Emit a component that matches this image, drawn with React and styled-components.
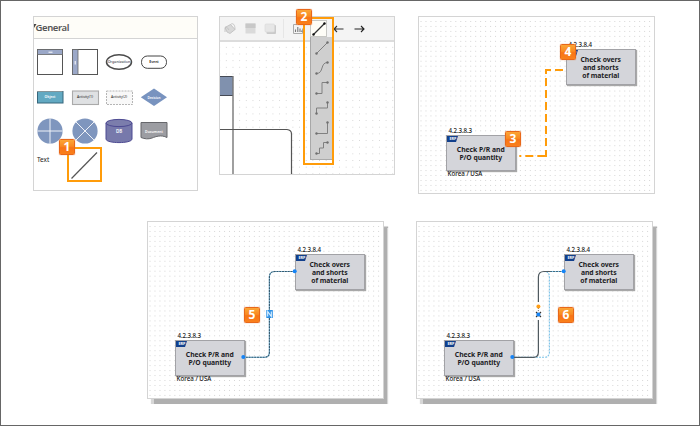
import React from 'react';
import styled, { createGlobalStyle } from 'styled-components';

const GlobalStyle = createGlobalStyle`
  * { box-sizing: border-box; }
  body { margin: 0; background: #fff; font-family: "Noto Sans", "Open Sans", sans-serif; }
  svg { display: block; overflow: visible; }
`;

const Page = styled.main`
  width: 700px;
  height: 426px;
  border: 1px solid #666;
  padding: 15px 0 0;
  background: #fff;
  overflow: hidden;
`;

const TopRow = styled.section`
  display: flex;
  align-items: flex-start;
  height: 205px;
  padding-left: 32px;
`;

const BottomRow = styled.section`
  display: flex;
  gap: 32px;
  padding-left: 146px;
`;

const Panel = styled.div`
  position: relative;
  border: 1px solid #d4d4d4;
  background: #fff;
`;

const Palette = styled(Panel)`
  width: 165px;
  height: 175px;
  margin-right: 21px;
`;

const PaletteHeader = styled.header`
  display: flex;
  align-items: center;
  height: 22px;
  border-bottom: 1px solid #d4d4d4;
  background: #fefdf8;
  color: #555;
  font-size: 9.5px;
  font-weight: 600;
  letter-spacing: -0.4px;
`;

const Tiles = styled.div`
  display: grid;
  grid-template-columns: repeat(4, 32px);
  grid-auto-rows: 32px;
  gap: 2.5px;
  padding-top: 7px;
`;

const TileSvg = styled.svg`
  width: 32px;
  height: 32px;
  text-anchor: middle;
  font-size: 3.8px;
  font-family: "Noto Sans", sans-serif;
`;

const TextTile = styled.span`
  padding: 5.5px 0 0 3px;
  font: 400 6.4px/9px "Noto Sans", sans-serif;
  color: #222;
`;

const SelectedTile = styled.div`
  width: 35px;
  height: 35px;
  margin: -2.5px -1.5px;
  padding: 0;
  border: 2px solid #ff9c0a;
  background: #fff;
`;

const dotted = ({ $pitch }) => `
  background-image: radial-gradient(circle at 50% 50%, #d6d6d6 0.45px, transparent 0.9px);
  background-size: ${$pitch}px ${$pitch}px;
`;

const Editor = styled(Panel)`
  width: 176px;
  height: 159px;
  margin-right: 23px;
`;

const Toolbar = styled.div`
  display: flex;
  align-items: center;
  height: 25px;
  border-bottom: 2px solid #dcdcdc;
  background: #f4f4f4;
`;

const ToolButton = styled.span`
  display: flex;
  flex: none;
  align-items: center;
  justify-content: center;
  width: ${({ $w }) => $w || 20}px;
  height: 17px;
  border: 1px solid ${({ $active }) => ($active ? '#c8c8c4' : 'transparent')};
  background: ${({ $active }) => ($active ? '#fefdf7' : 'transparent')};

  svg { flex: none; }
`;

const Divider = styled.i`
  width: 1px;
  height: 19px;
  margin: 0 2px 0 3px;
  background: #e6e6e6;
`;

const EditorCanvas = styled.div`
  height: 132px;
  ${dotted}
  background-position: 3px 2px;
`;

const LineMenu = styled.div`
  position: absolute;
  left: 90px;
  top: 20px;
  width: 23px;
  height: 123px;
  display: flex;
  flex-direction: column;
  align-items: center;
  padding-top: 1px;
  background: #cfcfcf;
  border-left: 1px solid #a8a8a8;
  border-bottom: 1px solid #aaa;
`;

const MenuFrame = styled.div`
  position: absolute;
  left: 83px;
  top: 0;
  width: 31px;
  height: 148px;
  border: 2px solid #ff9c0a;
`;

const Flow = styled(Panel)`
  width: 237px;
  height: 178px;
  ${dotted}
  background-position: 4.5px 2px;
  box-shadow: ${({ $raised }) => ($raised ? '4px 4.5px 1px #afafaf' : 'none')};
`;

const Overlay = styled.svg`
  position: absolute;
  left: -1px;
  top: -1px;
  width: 237px;
  height: 178px;
  fill: none;
`;

const FlowNode = styled.div`
  position: absolute;
  left: ${({ $x }) => $x}px;
  top: ${({ $y }) => $y}px;
  width: 69.5px;
  height: 35.5px;
  display: flex;
  align-items: center;
  justify-content: center;
  padding-top: 2.5px;
  border: 1px solid #a2a2a6;
  background: #d4d5da;
  box-shadow: 1px 1px 1px #a8a8a8;
  color: #1c1c24;
  font-size: 6.8px;
  line-height: 8.3px;
  font-weight: 700;
  letter-spacing: -0.04px;
  text-align: center;
  white-space: pre;
`;

const NodeCaption = styled.span`
  position: absolute;
  left: ${({ $left }) => $left}px;
  top: ${({ $top }) => $top}px;
  color: #151515;
  font-size: 6.2px;
  line-height: 8px;
  font-weight: 500;
  letter-spacing: ${({ $ls }) => $ls || 0}px;
`;

const ErpTag = styled.span`
  position: absolute;
  left: 0;
  top: 0;
  width: 11px;
  height: 6px;
  padding-left: 2.5px;
  background: #12408c;
  clip-path: polygon(0 0, 100% 0, 82% 100%, 0 100%);
  color: #fff;
  font-size: 3.8px;
  line-height: 6px;
  text-align: left;
`;

const Badge = styled.b`
  position: absolute;
  left: ${({ $x }) => $x}px;
  top: ${({ $y }) => $y}px;
  display: grid;
  place-items: center;
  width: 16px;
  height: 16px;
  border: 1px solid #e8681a;
  border-radius: 1.5px;
  background: linear-gradient(#fba536, #f98a22 45%, #f87416 55%, #f9801c);
  box-shadow: 0 0 1px #d96a20;
  color: #fff;
  font: 700 12px/14px "Noto Sans", sans-serif;
`;

const Tile = ({ children }) => <TileSvg viewBox="-16 -16 32 32">{children}</TileSvg>;

const linePaths = [
  'M-5.5 5.5L5.5-5.5',
  'M-5.5 5.5C2 5.5-2-5.5 5.5-5.5',
  'M-5.5 5.5H0V-5.5H5.5',
  'M-5.5 5.5V0H5.5V-5.5',
  'M-5.5 5.5H5.5V-5.5',
  'M-5.5 5.5H-2.5V0H1.5V-5.5H5.5',
];

const LineIcon = ({ d, dark }) => (
  <svg width="20" height="20" viewBox="-10 -10 20 20" fill="none">
    <path d={d} stroke={dark ? '#333' : '#808080'} strokeWidth={dark ? 1.2 : 1} />
    <circle cx="-5.5" cy="5.5" r="1.2" fill={dark ? '#111' : '#707070'} />
    <circle cx="5.5" cy="-5.5" r="1.2" fill={dark ? '#111' : '#707070'} />
  </svg>
);

function ShapePalette() {
  return (
    <Palette>
      <PaletteHeader>
        <svg width="1.5" height="5" viewBox="0 0 1.5 5"><path d="M0-1H2.5L0 3Z" fill="#444" /></svg>
        General
      </PaletteHeader>
      <Tiles>
        <Tile>
          <rect x="-12.5" y="-12.5" width="25" height="25" fill="#fff" stroke="#555" />
          <rect x="-12.5" y="-12.5" width="25" height="5" fill="#9ba8c8" stroke="#666" strokeWidth=".8" />
          <path d="M-1.5-9.8H2.5" stroke="#fff" />
        </Tile>
        <Tile>
          <rect x="-12.5" y="-12.5" width="25" height="25" fill="#fff" stroke="#555" />
          <rect x="-12.5" y="-12.5" width="5.5" height="25" fill="#9ba8c8" stroke="#666" strokeWidth=".8" />
          <path d="M-9.8-1V2.5" stroke="#fff" />
        </Tile>
        <Tile>
          <ellipse rx="12.5" ry="7.3" fill="#fff" stroke="#4b4b4b" strokeWidth="1.5" />
          <text y="1.2" fill="#223" fontSize="3.7">Organization</text>
        </Tile>
        <Tile>
          <rect x="-12.5" y="-6" width="25" height="12.3" rx="5.8" fill="#fff" stroke="#444" />
          <text y="1.3" fill="#222" fontWeight="600" fontSize="3.5">Event</text>
        </Tile>
        <Tile>
          <rect x="-12.5" y="-5.5" width="25.5" height="11.5" fill="#62a9c2" stroke="#37677c" />
          <path d="M-13-5.5H12.5" stroke="#85959a" />
          <text y="1.3" fill="#fff" fontSize="3.4" fontWeight="600">Object</text>
        </Tile>
        <Tile>
          <rect x="-12.5" y="-6" width="26" height="13.5" fill="#dfe1e3" stroke="#aaa" strokeWidth="1.1" />
          <text y="1" fill="#222" fontSize="3.5">Activity(1)</text>
        </Tile>
        <Tile>
          <rect x="-12.5" y="-6" width="26" height="13.5" fill="#f8f8f8" stroke="#b5b5b5" strokeDasharray="2 1" />
          <text y="1" fill="#222" fontSize="3.5">Activity(2)</text>
        </Tile>
        <Tile>
          <path d="M0-8.5L13 .2L0 9L-13.2 .2Z" fill="#7893bf" />
          <text y="2" fill="#fff" fontSize="3.2" fontWeight="600">Decision</text>
        </Tile>
        <Tile>
          <circle r="12.6" fill="#7f96be" />
          <path d="M-12.6 0H12.6M0-12.6V12.6" stroke="#eef1f7" />
        </Tile>
        <Tile>
          <circle r="12.6" fill="#7f96be" />
          <path d="M-9-9L9 9M9-9L-9 9" stroke="#eef1f7" />
        </Tile>
        <Tile>
          <path d="M-13-8V8C-13 12.8 13 12.8 13 8V-8" fill="#7779ab" stroke="#4d4a92" />
          <ellipse cy="-8" rx="13" ry="3.6" fill="#7b7dac" stroke="#4d4a92" />
          <text y="2" fill="#fff" fontSize="4.5" fontWeight="600">DB</text>
        </Tile>
        <Tile>
          <path d="M-13-8.5H13V6.5C7 3.5 2 5.5-2 7C-6 8.4-9 8-13 6.5Z" fill="#9c9da2" stroke="#66676b" />
          <text y="2" fill="#fff" fontSize="3.5" fontWeight="600">Document</text>
        </Tile>
        <TextTile>Text</TextTile>
        <SelectedTile>
          <svg width="31" height="31" viewBox="0 0 31 31">
            <path d="M2.5 29.5L28 3.5" stroke="#555" strokeWidth="1.2" />
          </svg>
        </SelectedTile>
      </Tiles>
      <Badge $x={25} $y={122}>1</Badge>
    </Palette>
  );
}

function LineEditor() {
  return (
    <Editor>
      <Toolbar>
        <ToolButton>
          <svg width="12" height="12" viewBox="0 0 12 12" fill="#d8d8d8" stroke="#bdbdbd" strokeWidth=".8">
            <path d="M1 4.5L6.5 1.5L11 6.5L6 10.5L3 9Z" />
            <path d="M1 4.5C3 3 4 6 5 7M6.5 1.5C9-.5 11 1.5 11 6.5" fill="none" />
            <path d="M1 5V9" fill="none" />
          </svg>
        </ToolButton>
        <ToolButton>
          <svg width="11" height="11" viewBox="0 0 11 11">
            <rect x=".5" y=".5" width="10" height="10" fill="#dadada" />
            <rect x=".5" y=".5" width="10" height="4.5" fill="#c8c8c8" />
          </svg>
        </ToolButton>
        <ToolButton>
          <svg width="11" height="11" viewBox="0 0 11 11">
            <rect x="1.5" y="2" width="9.5" height="9" rx="1" fill="#cacaca" />
            <rect x="0" y="1" width="9.5" height="8" rx="1" fill="#e6e6e6" stroke="#d8d8d8" strokeWidth=".6" />
          </svg>
        </ToolButton>
        <Divider />
        <ToolButton $w={24}>
          <svg width="10" height="10" viewBox="0 0 10 10" fill="none">
            <path d="M.5 .5V9.5H9.5V4.5M.5 .5H4" stroke="#aaa" />
            <path d="M2.5 8V5.5M4.8 8V3M7 8V4.5M8.8 8V6.5" stroke="#777" strokeWidth="1.1" />
          </svg>
        </ToolButton>
        <ToolButton $active $w={17}><LineIcon d={linePaths[0]} dark /></ToolButton>
        <ToolButton $w={23}>
          <svg width="11" height="8" viewBox="0 0 11 8" fill="none" stroke="#333" strokeWidth="1.1">
            <path d="M.7 4H10.5M4 1L1 4L4 7" />
          </svg>
        </ToolButton>
        <ToolButton $w={18}>
          <svg width="11" height="8" viewBox="0 0 11 8" fill="none" stroke="#222" strokeWidth="1.1">
            <path d="M.5 4H10M7 1L10 4L7 7" />
          </svg>
        </ToolButton>
      </Toolbar>
      <EditorCanvas $pitch={6.67}>
        <svg width="174" height="132" viewBox="0 0 174 132" fill="none">
          <path d="M0 34V132H13V34" fill="#fff" />
          <path d="M0 88H68Q71.5 88 71.5 91.5V132H0Z" fill="#fff" />
          <rect x="0" y="34" width="13" height="19" fill="#8091ae" />
          <path d="M0 34.5H13M0 53.5H13" stroke="#454a55" />
          <path d="M13 34V132" stroke="#777" strokeWidth="1.4" />
          <path d="M0 87.5H67Q71.5 88 71.5 92V132" stroke="#555" strokeWidth="1.2" />
        </svg>
      </EditorCanvas>
      <LineMenu>
        {linePaths.map((d) => <LineIcon key={d} d={d} />)}
      </LineMenu>
      <MenuFrame />
      <Badge $x={76} $y={-8}>2</Badge>
    </Editor>
  );
}

function ProcessNodes() {
  return (
    <>
      <FlowNode $x={147} $y={32}>
        <NodeCaption $top={-9.5} $left={1.5} $ls={-0.1}>4.2.3.8.4</NodeCaption>
        <ErpTag>ERP</ErpTag>
        {'Check overs\nand shorts\nof material'}
      </FlowNode>
      <FlowNode $x={27} $y={118}>
        <NodeCaption $top={-9.5} $left={1.5} $ls={-0.1}>4.2.3.8.3</NodeCaption>
        <ErpTag>ERP</ErpTag>
        {'Check P/R and\nP/O quantity'}
        <NodeCaption $top={34} $left={0.5}>Korea / USA</NodeCaption>
      </FlowNode>
    </>
  );
}

const EndPoints = () => (
  <g fill="#1684f5">
    <circle cx="96.3" cy="136" r="2" />
    <circle cx="147.7" cy="50.3" r="2" />
  </g>
);

export default function App() {
  return (
    <Page>
      <GlobalStyle />
      <TopRow>
        <ShapePalette />
        <LineEditor />
        <Flow $pitch={4.98}>
          <ProcessNodes />
          <Overlay stroke="#ff9c0a" strokeWidth="2">
            <path d="M129 140H101" strokeDasharray="9.7 4 8 4 2 9" />
            <path d="M128 141V57" strokeDasharray="8 4" strokeDashoffset="1" />
            <path d="M128 58V54H133M137 54H145" />
          </Overlay>
          <Badge $x={141} $y={27}>4</Badge>
          <Badge $x={86} $y={114}>3</Badge>
        </Flow>
      </TopRow>
      <BottomRow>
        <Flow $pitch={4.98} $raised>
          <ProcessNodes />
          <Overlay>
            <path d="M96 136.3H117.5Q122.4 136.3 122.4 131V56Q122.4 50.5 128 50.5H147" stroke="#8fc6e6" strokeWidth="1.2" />
            <path d="M96 136.3H117.5Q122.4 136.3 122.4 131V56Q122.4 50.5 128 50.5H147" stroke="#35596d" strokeWidth="1.1" strokeDasharray="2 .8" />
            <rect x="119.3" y="89" width="6.5" height="8" fill="#2c90e5" />
            <path d="M120.7 95.5V90.5L124.3 95.5V90.5" stroke="#e2f3ff" strokeWidth="1.1" />
            <EndPoints />
          </Overlay>
          <Badge $x={96} $y={85}>5</Badge>
        </Flow>
        <Flow $pitch={4.98} $raised>
          <ProcessNodes />
          <Overlay>
            <path d="M96 136.3H128Q133.4 136.3 133.4 131V56Q133.4 50.5 128 50.5H147" stroke="#7cc3e8" strokeWidth="1.1" strokeDasharray="2 1" />
            <path d="M96 136.3H117.5Q122.4 136.3 122.4 131V99M122.4 81V56Q122.4 50.5 128 50.5H134" stroke="#505a60" strokeWidth="1.2" />
            <path d="M134 50.5H147" stroke="#446b80" strokeDasharray="2 1" />
            <path d="M122.4 87V91" stroke="#777" strokeDasharray="1 1" />
            <circle cx="122.4" cy="85.4" r="2" fill="#ff9e16" />
            <path d="M120 91L125 96M125 91L120 96" stroke="#333" strokeWidth="1.1" />
            <circle cx="122.4" cy="93.5" r="2" fill="#1684f5" />
            <EndPoints />
          </Overlay>
          <Badge $x={141} $y={85}>6</Badge>
        </Flow>
      </BottomRow>
    </Page>
  );
}
